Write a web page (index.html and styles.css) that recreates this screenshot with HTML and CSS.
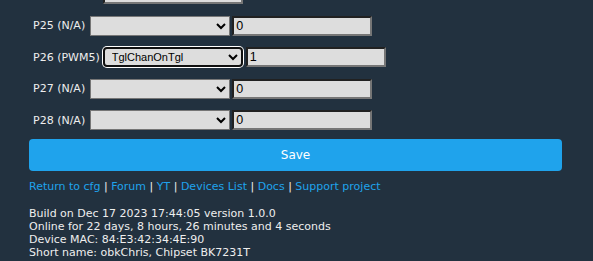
FILE: index.html
```html
<!DOCTYPE html>
<html>
<head>
<meta charset="utf-8">
<title>Pins</title>
<link rel="stylesheet" href="styles.css">
</head>
<body>
<div class="wrap">
  <form class="pins">
    <div class="row row-top"><input class="fld" value=""></div>
    <div class="row"><span class="lbl">P25 (N/A)</span><select class="sel"><option></option></select><input class="fld" value="0"></div>
    <div class="row"><span class="lbl">P26 (PWM5)</span><select class="sel sel-focus"><option>TglChanOnTgl</option></select><input class="fld fld-gap" value="1"></div>
    <div class="row"><span class="lbl">P27 (N/A)</span><select class="sel"><option></option></select><input class="fld" value="0"></div>
    <div class="row"><span class="lbl">P28 (N/A)</span><select class="sel"><option></option></select><input class="fld" value="0"></div>
  </form>
  <button class="save" type="button">Save</button>
  <div class="links"><a href="#">Return to cfg</a> | <a href="#">Forum</a> | <a href="#">YT</a> | <a href="#">Devices List</a> | <a href="#">Docs</a> | <a href="#">Support project</a></div>
  <div class="info">
    <div>Build on Dec 17 2023 17:44:05 version 1.0.0</div>
    <div>Online for 22 days, 8 hours, 26 minutes and 4 seconds</div>
    <div>Device MAC: 84:E3:42:34:4E:90</div>
    <div>Short name: obkChris, Chipset BK7231T</div>
  </div>
</div>
</body>
</html>
```

FILE: styles.css
```css
html {
  margin: 0;
  padding: 0;
  background: #22313f;
  overflow: hidden;
}
body {
  margin: 0;
  padding: 0;
  color: #eeeeee;
  font-family: "DejaVu Sans", Verdana, sans-serif;
  font-size: 11px;
  line-height: 13px;
}
.wrap {
  padding: 0 31px 0 29px;
}
.pins {
  margin: -21.75px 0 0 0;
  padding: 0 0 0 4px;
}
.row {
  display: flex;
  align-items: center;
  height: 31.5px;
}
.row-top {
  padding-left: 70px;
}
.lbl {
  margin-right: 5px;
  white-space: nowrap;
}
.sel {
  box-sizing: border-box;
  width: 140px;
  height: 20px;
  margin: 0;
  padding: 0 0 0 3px;
  background-color: #dddddd;
  border: 1px solid #767676;
  border-radius: 0;
  color: #000;
  font-family: "Liberation Sans", Arial, sans-serif;
  font-size: 11px;
}
.sel-focus {
  margin-left: -2px;
  border: 2px solid #101010;
  border-radius: 4px;
  box-shadow: 0 0 0 1px #ffffff;
  padding-left: 3px;
}
.fld {
  box-sizing: border-box;
  width: 140px;
  height: 20px;
  margin: 0 0 0 2px;
  padding: 0 2px;
  background: #dddddd;
  border: 2px inset #767676;
  color: #000;
  font-family: "Liberation Sans", Arial, sans-serif;
  font-size: 12.5px;
}
.fld-gap {
  margin-left: 3px;
}
.row-top .fld {
  margin-left: 0;
}
.save {
  display: block;
  box-sizing: border-box;
  width: 100%;
  height: 32px;
  margin: 3.25px 0 0 0;
  padding: 0;
  border: 0;
  border-radius: 4px;
  background: #1fa3ec;
  color: #fff;
  font-family: "DejaVu Sans", Verdana, sans-serif;
  font-size: 12px;
}
.links {
  margin-top: 9px;
}
.links a {
  color: #1fa3ec;
  text-decoration: none;
}
.info {
  margin-top: 14px;
}
```
